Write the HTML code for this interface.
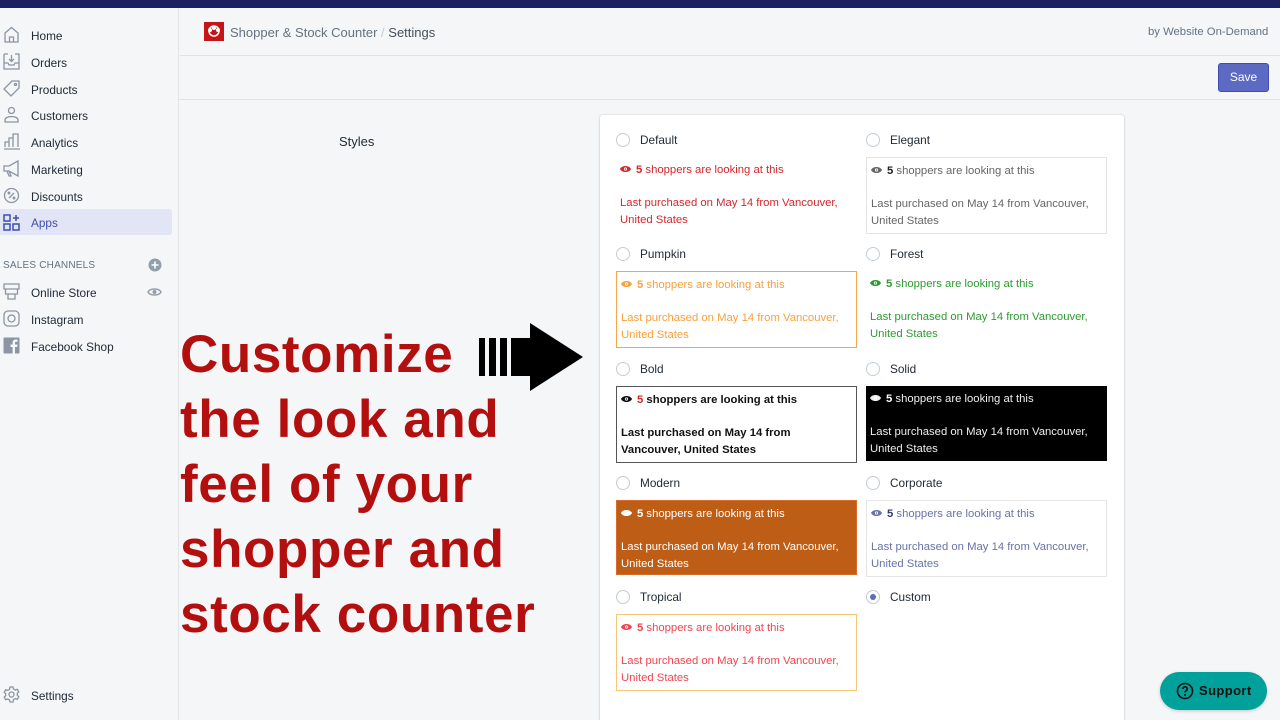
<!DOCTYPE html>
<html><head><meta charset="utf-8"><style>
*{margin:0;padding:0;box-sizing:border-box}
html{width:1280px;height:720px;overflow:hidden}
body{width:1280px;height:720px;overflow:hidden;background:#f4f6f8;font-family:"Liberation Sans",sans-serif;position:relative;color:#212b36}
.a{position:absolute}
.top{left:0;top:0;width:1280px;height:8px;background:#1c2260}
.side{left:0;top:8px;width:179px;height:712px;border-right:1px solid #e1e3e5;background:#f4f6f8}
.nav{position:absolute;left:31px;font-size:11.8px;color:#212b36;line-height:16px}
.hdr{left:180px;top:55px;width:1100px;height:1px;background:#dfe3e8}
.hdr2{left:180px;top:99px;width:1100px;height:1px;background:#dfe3e8}
.card{left:600px;top:115px;width:524px;height:620px;background:#fff;box-shadow:0 0 0 1px rgba(63,63,68,.06),0 1px 3px rgba(63,63,68,.15);border-radius:3px}
.rad{position:absolute;width:14px;height:14px;border:1px solid #c4cdd5;border-radius:50%;background:#fff}
.lbl{position:absolute;font-size:11.8px;color:#212b36;line-height:14px}
.box{position:absolute;width:241px;height:77px;font-size:11.3px;line-height:16.5px}
.box .l1{position:absolute;left:4px;top:5px;white-space:nowrap}
.box .l2{position:absolute;left:4px;top:38px;width:232px}
.eye{display:inline-block;width:11px;height:8px;vertical-align:0px;margin-right:5px}
.big{left:180px;top:322px;font-size:53px;font-weight:bold;color:#b30f0f;line-height:65px;letter-spacing:0.6px}
</style></head><body>
<div class="a top"></div>
<div class="a side"></div>
<svg class="a" style="left:3px;top:26px" width="17" height="17" viewBox="0 0 17 17" fill="none" stroke="#8b95a3" stroke-width="1.3"><path d="M2 7L8.5 1.5 15 7v9H2z"/><path d="M6.5 16v-5h4v5"/></svg>
<div class="nav" style="top:28px">Home</div>
<svg class="a" style="left:3px;top:53px" width="17" height="17" viewBox="0 0 17 17" fill="none" stroke="#8b95a3" stroke-width="1.3"><path d="M1 1h4M12 1h4v15H1V1"/><path d="M1 10h4l1 2h5l1-2h4M8.5 2v6M6 6l2.5 2.5L11 6"/></svg>
<div class="nav" style="top:55px">Orders</div>
<svg class="a" style="left:3px;top:80px" width="17" height="17" viewBox="0 0 17 17" fill="none" stroke="#8b95a3" stroke-width="1.3"><path d="M9 1h7v7l-8 8-7-7z"/><circle cx="12.5" cy="4.5" r="1"/></svg>
<div class="nav" style="top:82px">Products</div>
<svg class="a" style="left:3px;top:106px" width="17" height="17" viewBox="0 0 17 17" fill="none" stroke="#8b95a3" stroke-width="1.3"><circle cx="8.5" cy="4.5" r="3"/><path d="M2 16v-2c0-2 3-3.5 6.5-3.5S15 12 15 14v2z"/></svg>
<div class="nav" style="top:108px">Customers</div>
<svg class="a" style="left:3px;top:133px" width="17" height="17" viewBox="0 0 17 17" fill="none" stroke="#8b95a3" stroke-width="1.3"><path d="M1 16h16M2 14V9h4v5M6 14V5h4v9M10 14V1h5v13"/></svg>
<div class="nav" style="top:135px">Analytics</div>
<svg class="a" style="left:3px;top:160px" width="17" height="17" viewBox="0 0 17 17" fill="none" stroke="#8b95a3" stroke-width="1.3"><path d="M1 6h5l9-5v15L6 11H1zM4 11l2 5h2L6 11"/></svg>
<div class="nav" style="top:162px">Marketing</div>
<svg class="a" style="left:3px;top:187px" width="17" height="17" viewBox="0 0 17 17" fill="none" stroke="#8b95a3" stroke-width="1.3"><circle cx="8.5" cy="8.5" r="7"/><path d="M6 11l5-5"/><circle cx="6" cy="6" r=".8"/><circle cx="11" cy="11" r=".8"/></svg>
<div class="nav" style="top:189px">Discounts</div>
<div class="a" style="left:0;top:209px;width:172px;height:26px;background:#e2e5f5;border-radius:0 3px 3px 0"></div>
<svg class="a" style="left:3px;top:214px" width="17" height="17" viewBox="0 0 17 17" fill="none" stroke="#3f4eae" stroke-width="1.5"><rect x="1" y="1" width="6" height="6"/><rect x="1" y="10" width="6" height="6"/><rect x="10" y="10" width="6" height="6"/><path d="M13 1v6M10 4h6"/></svg>
<div class="nav" style="top:215px;color:#3f4eae">Apps</div>
<div class="a" style="left:3px;top:260px;font-size:10px;color:#637381;letter-spacing:.2px">SALES CHANNELS</div>
<svg class="a" style="left:148px;top:258px" width="14" height="14" viewBox="0 0 14 14"><circle cx="7" cy="7" r="6.5" fill="#919eab"/><path d="M7 3.5v7M3.5 7h7" stroke="#fff" stroke-width="1.6"/></svg>
<svg class="a" style="left:3px;top:283px" width="17" height="17" viewBox="0 0 17 17" fill="none" stroke="#8b95a3" stroke-width="1.3"><path d="M1 1h15v5H1zM2.5 6v5h12V6M5 11v5h7v-5"/></svg>
<div class="nav" style="top:285px">Online Store</div>
<svg class="a" style="left:147px;top:287px" width="15" height="10" viewBox="0 0 15 10"><path d="M1 5c2-4 11-4 13 0-2 4-11 4-13 0z" fill="none" stroke="#919eab" stroke-width="1.4"/><circle cx="7.5" cy="5" r="2" fill="#919eab"/></svg>
<svg class="a" style="left:3px;top:310px" width="17" height="17" viewBox="0 0 17 17" fill="none" stroke="#8b95a3" stroke-width="1.3"><rect x="1" y="1" width="15" height="15" rx="4"/><circle cx="8.5" cy="8.5" r="3.5"/></svg>
<div class="nav" style="top:312px">Instagram</div>
<svg class="a" style="left:3px;top:337px" width="17" height="17" viewBox="0 0 17 17"><rect x="0.5" y="0.5" width="16" height="16" rx="1" fill="#8b95a3"/><path d="M12 17V10h2.2l.3-2.5H12V6c0-.7.3-1.2 1.3-1.2h1.3V2.6c-.3 0-1-.1-1.9-.1-1.9 0-3.1 1.1-3.1 3.2v1.8H7.5V10h2.1v7z" fill="#f4f6f8"/></svg>
<div class="nav" style="top:339px">Facebook Shop</div>
<svg class="a" style="left:3px;top:686px" width="17" height="17" viewBox="0 0 17 17" fill="none" stroke="#8b95a3" stroke-width="1.3"><path d="M7 1h3l.5 2 1.8 1 2-.7 1.5 2.6-1.5 1.4v2l1.5 1.4-1.5 2.6-2-.7-1.8 1L10 16H7l-.5-2-1.8-1-2 .7-1.5-2.6 1.5-1.4v-2L1.2 6.3l1.5-2.6 2 .7 1.8-1z"/><circle cx="8.5" cy="8.5" r="2.5"/></svg>
<div class="nav" style="top:688px">Settings</div>

<svg class="a" style="left:204px;top:22px" width="20" height="19" viewBox="0 0 20 19"><rect width="20" height="19" fill="#c41616"/><circle cx="10" cy="9" r="5" fill="none" stroke="#fff" stroke-width="1.5"/><circle cx="6" cy="8" r="2" fill="#fff"/><circle cx="14" cy="8" r="2" fill="#fff"/><circle cx="10" cy="6" r="2" fill="#fff"/></svg>
<div class="a" style="left:230px;top:25px;font-size:13px;color:#637381">Shopper &amp; Stock Counter <span style="color:#c4cdd5">/</span> <span style="color:#454f5b">Settings</span></div>
<div class="a" style="left:1148px;top:26px;font-size:11.3px;color:#637381">by Website On-Demand</div>
<div class="a hdr"></div>
<div class="a" style="left:1218px;top:63px;width:51px;height:29px;background:#5c6ac4;border:1px solid #3f4eae;border-radius:3px;color:#fff;font-size:12px;text-align:center;line-height:27px">Save</div>
<div class="a hdr2"></div>
<div class="a" style="left:339px;top:134px;font-size:13px;color:#212b36">Styles</div>

<div class="a big">Customize<br>the look and<br>feel of your<br>shopper and<br>stock counter</div>
<svg class="a" style="left:478px;top:322px" width="106" height="70" viewBox="0 0 106 70"><rect x="1" y="16" width="6" height="38"/><rect x="11" y="16" width="7" height="38"/><rect x="22" y="16" width="7" height="38"/><rect x="33" y="16" width="20" height="38"/><path d="M52 1L105 35 52 69z"/></svg>

<div class="a card"></div>
<div class="rad" style="left:616px;top:133px"></div><div class="lbl" style="left:640px;top:133px">Default</div>
<div class="rad" style="left:866px;top:133px"></div><div class="lbl" style="left:890px;top:133px">Elegant</div>
<div class="rad" style="left:616px;top:247px"></div><div class="lbl" style="left:640px;top:247px">Pumpkin</div>
<div class="rad" style="left:866px;top:247px"></div><div class="lbl" style="left:890px;top:247px">Forest</div>
<div class="rad" style="left:616px;top:362px"></div><div class="lbl" style="left:640px;top:362px">Bold</div>
<div class="rad" style="left:866px;top:362px"></div><div class="lbl" style="left:890px;top:362px">Solid</div>
<div class="rad" style="left:616px;top:476px"></div><div class="lbl" style="left:640px;top:476px">Modern</div>
<div class="rad" style="left:866px;top:476px"></div><div class="lbl" style="left:890px;top:476px">Corporate</div>
<div class="rad" style="left:616px;top:590px"></div><div class="lbl" style="left:640px;top:590px">Tropical</div>
<div class="rad" style="left:866px;top:590px"><div style="position:absolute;left:3px;top:3px;width:6px;height:6px;border-radius:50%;background:#5c6ac4"></div></div><div class="lbl" style="left:890px;top:590px">Custom</div>

<svg width="0" height="0" style="position:absolute"><defs><symbol id="e" viewBox="0 0 11 8"><path d="M0 4C2 0 9 0 11 4 9 8 2 8 0 4z" fill="currentColor"/><circle cx="5.5" cy="4" r="1.6" fill="#fff"/><circle cx="5.5" cy="4" r=".8" fill="currentColor"/></symbol></defs></svg>

<div class="box" style="left:616px;top:157px;color:#d3272c"><div class="l1"><svg class="eye"><use href="#e"/></svg><b>5</b> shoppers are looking at this</div><div class="l2">Last purchased on May 14 from Vancouver, United States</div></div>
<div class="box" style="left:866px;top:157px;border:1px solid #e3e3e3;color:#666"><div class="l1"><svg class="eye"><use href="#e"/></svg><b style="color:#222">5</b> shoppers are looking at this</div><div class="l2">Last purchased on May 14 from Vancouver, United States</div></div>
<div class="box" style="left:616px;top:271px;border:1px solid #f8a54c;color:#f8a03c"><div class="l1"><svg class="eye"><use href="#e"/></svg><b>5</b> shoppers are looking at this</div><div class="l2">Last purchased on May 14 from Vancouver, United States</div></div>
<div class="box" style="left:866px;top:271px;color:#2d9a31"><div class="l1"><svg class="eye"><use href="#e"/></svg><b>5</b> shoppers are looking at this</div><div class="l2">Last purchased on May 14 from Vancouver, United States</div></div>
<div class="box" style="left:616px;top:386px;border:1px solid #555;color:#111;font-weight:bold"><div class="l1"><svg class="eye"><use href="#e"/></svg><span style="color:#d3272c">5</span> shoppers are looking at this</div><div class="l2" style="width:200px">Last purchased on May 14 from Vancouver, United States</div></div>
<div class="box" style="left:866px;top:386px;background:#000;color:#eee;height:75px"><div class="l1"><svg class="eye" style="color:#eee"><use href="#e"/></svg><b style="color:#fff">5</b> shoppers are looking at this</div><div class="l2">Last purchased on May 14 from Vancouver, United States</div></div>
<div class="box" style="left:616px;top:500px;background:#be5e16;border:1px solid #d86b2a;color:#fff;height:75px"><div class="l1"><svg class="eye"><use href="#e"/></svg><b>5</b> shoppers are looking at this</div><div class="l2">Last purchased on May 14 from Vancouver, United States</div></div>
<div class="box" style="left:866px;top:500px;border:1px solid #e6e6e6;color:#6673a8"><div class="l1"><svg class="eye"><use href="#e"/></svg><b style="color:#333c6b">5</b> shoppers are looking at this</div><div class="l2">Last purchased on May 14 from Vancouver, United States</div></div>
<div class="box" style="left:616px;top:614px;border:1px solid #f8c678;color:#f0454f"><div class="l1"><svg class="eye"><use href="#e"/></svg><b>5</b> shoppers are looking at this</div><div class="l2">Last purchased on May 14 from Vancouver, United States</div></div>

<div class="a" style="left:1160px;top:672px;width:107px;height:38px;border-radius:19px;background:#00a19a;box-shadow:0 1px 3px rgba(0,0,0,.2)"></div>
<svg class="a" style="left:1176px;top:682px" width="18" height="18" viewBox="0 0 18 18"><circle cx="9" cy="9" r="7.5" fill="none" stroke="#111" stroke-width="1.6"/><path d="M6.8 7a2.2 2.2 0 1 1 3 2c-.7.3-.8.8-.8 1.5" fill="none" stroke="#111" stroke-width="1.6"/><circle cx="9" cy="13" r="1" fill="#111"/></svg>
<div class="a" style="left:1199px;top:683px;font-size:13px;font-weight:bold;color:#111;letter-spacing:.4px">Support</div>
</body></html>
